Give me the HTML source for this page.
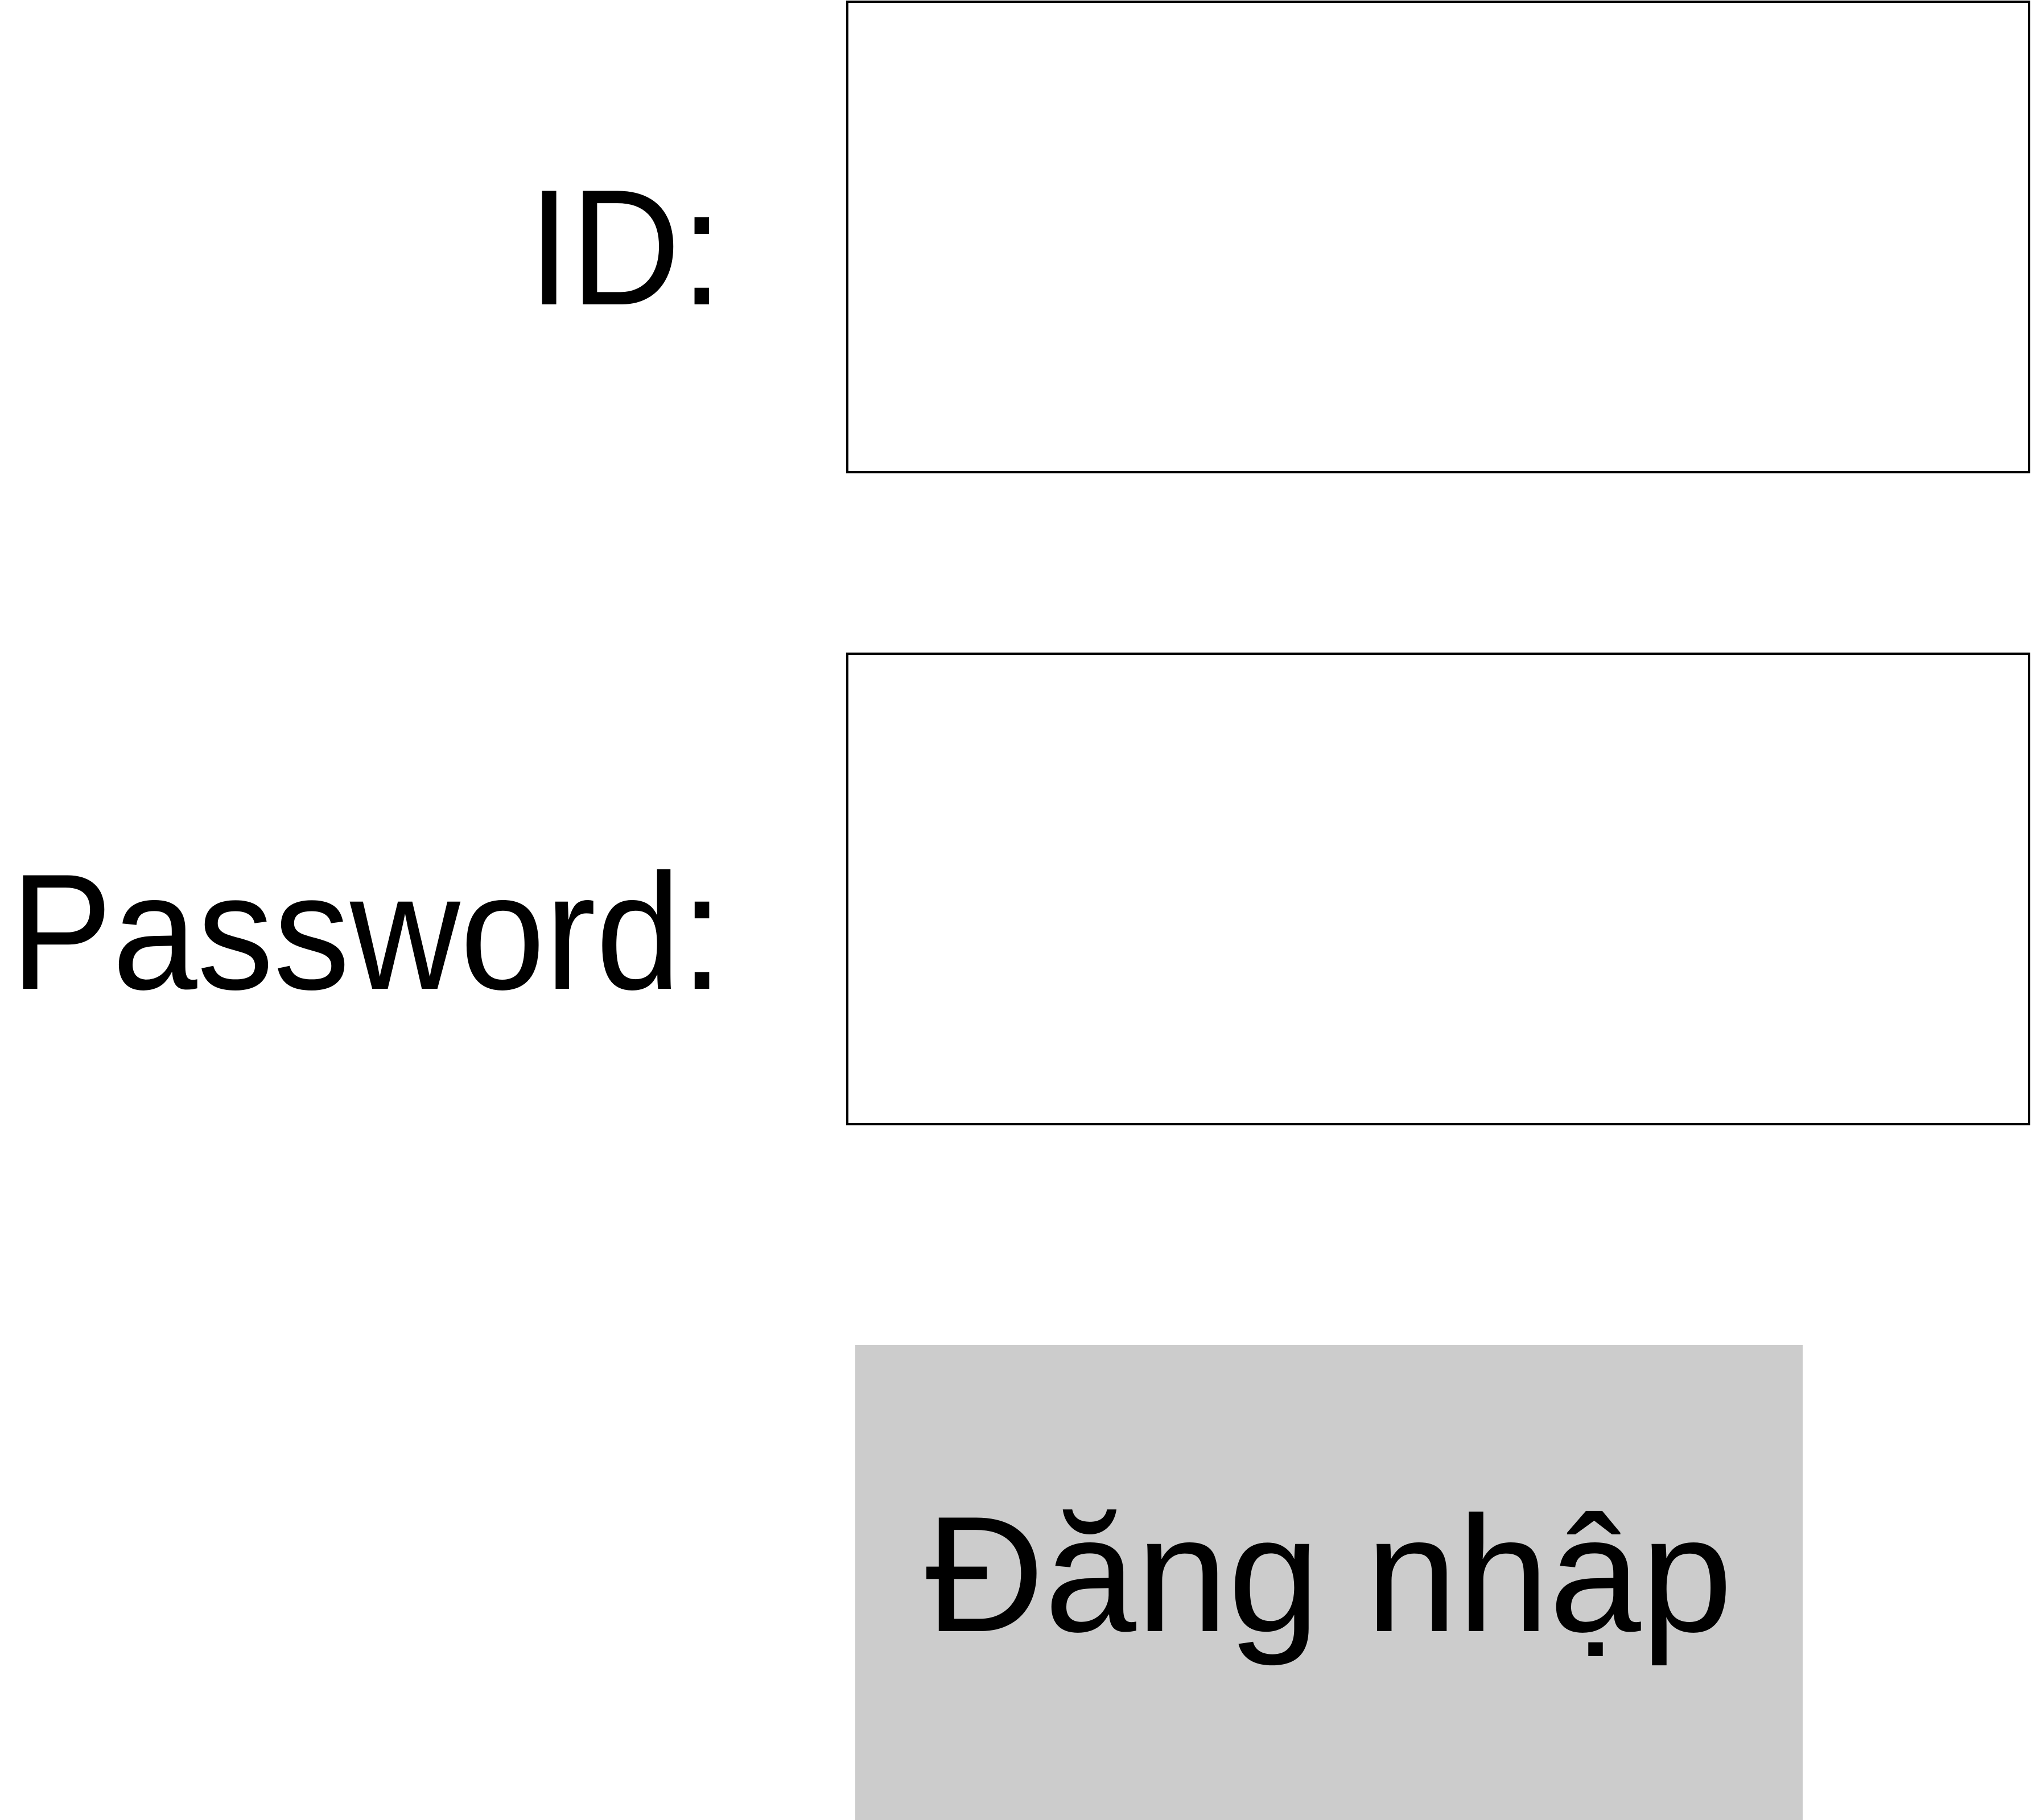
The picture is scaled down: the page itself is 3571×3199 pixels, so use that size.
<!DOCTYPE html>
<html>
<head>
<meta charset="utf-8">
<style>
  html,body{margin:0;padding:0;background:#fff;}
  body{width:3571px;height:3199px;position:relative;overflow:hidden;font-family:"Liberation Sans","DejaVu Sans",sans-serif;color:#000;}
  .box{position:absolute;left:1487px;width:2073px;border:4px solid #000;background:#fff;}
  .lbl{position:absolute;right:2300px;font-size:290px;line-height:1;white-space:nowrap;transform:scaleX(0.925);transform-origin:right center;}
  .btn{position:absolute;left:1503px;top:2364px;width:1665px;height:835px;background:#cccccc;}
  .btntxt{position:absolute;left:0;width:1665px;text-align:center;top:258px;font-size:290px;line-height:1;white-space:nowrap;}
</style>
</head>
<body>
  <div class="lbl" style="top:290px;">ID:</div>
  <div class="box" style="top:1px;height:823px;"></div>
  <div class="lbl" style="top:1493px;">Password:</div>
  <div class="box" style="top:1147px;height:823px;"></div>
  <div class="btn"><div class="btntxt">Đăng nhập</div></div>
</body>
</html>
